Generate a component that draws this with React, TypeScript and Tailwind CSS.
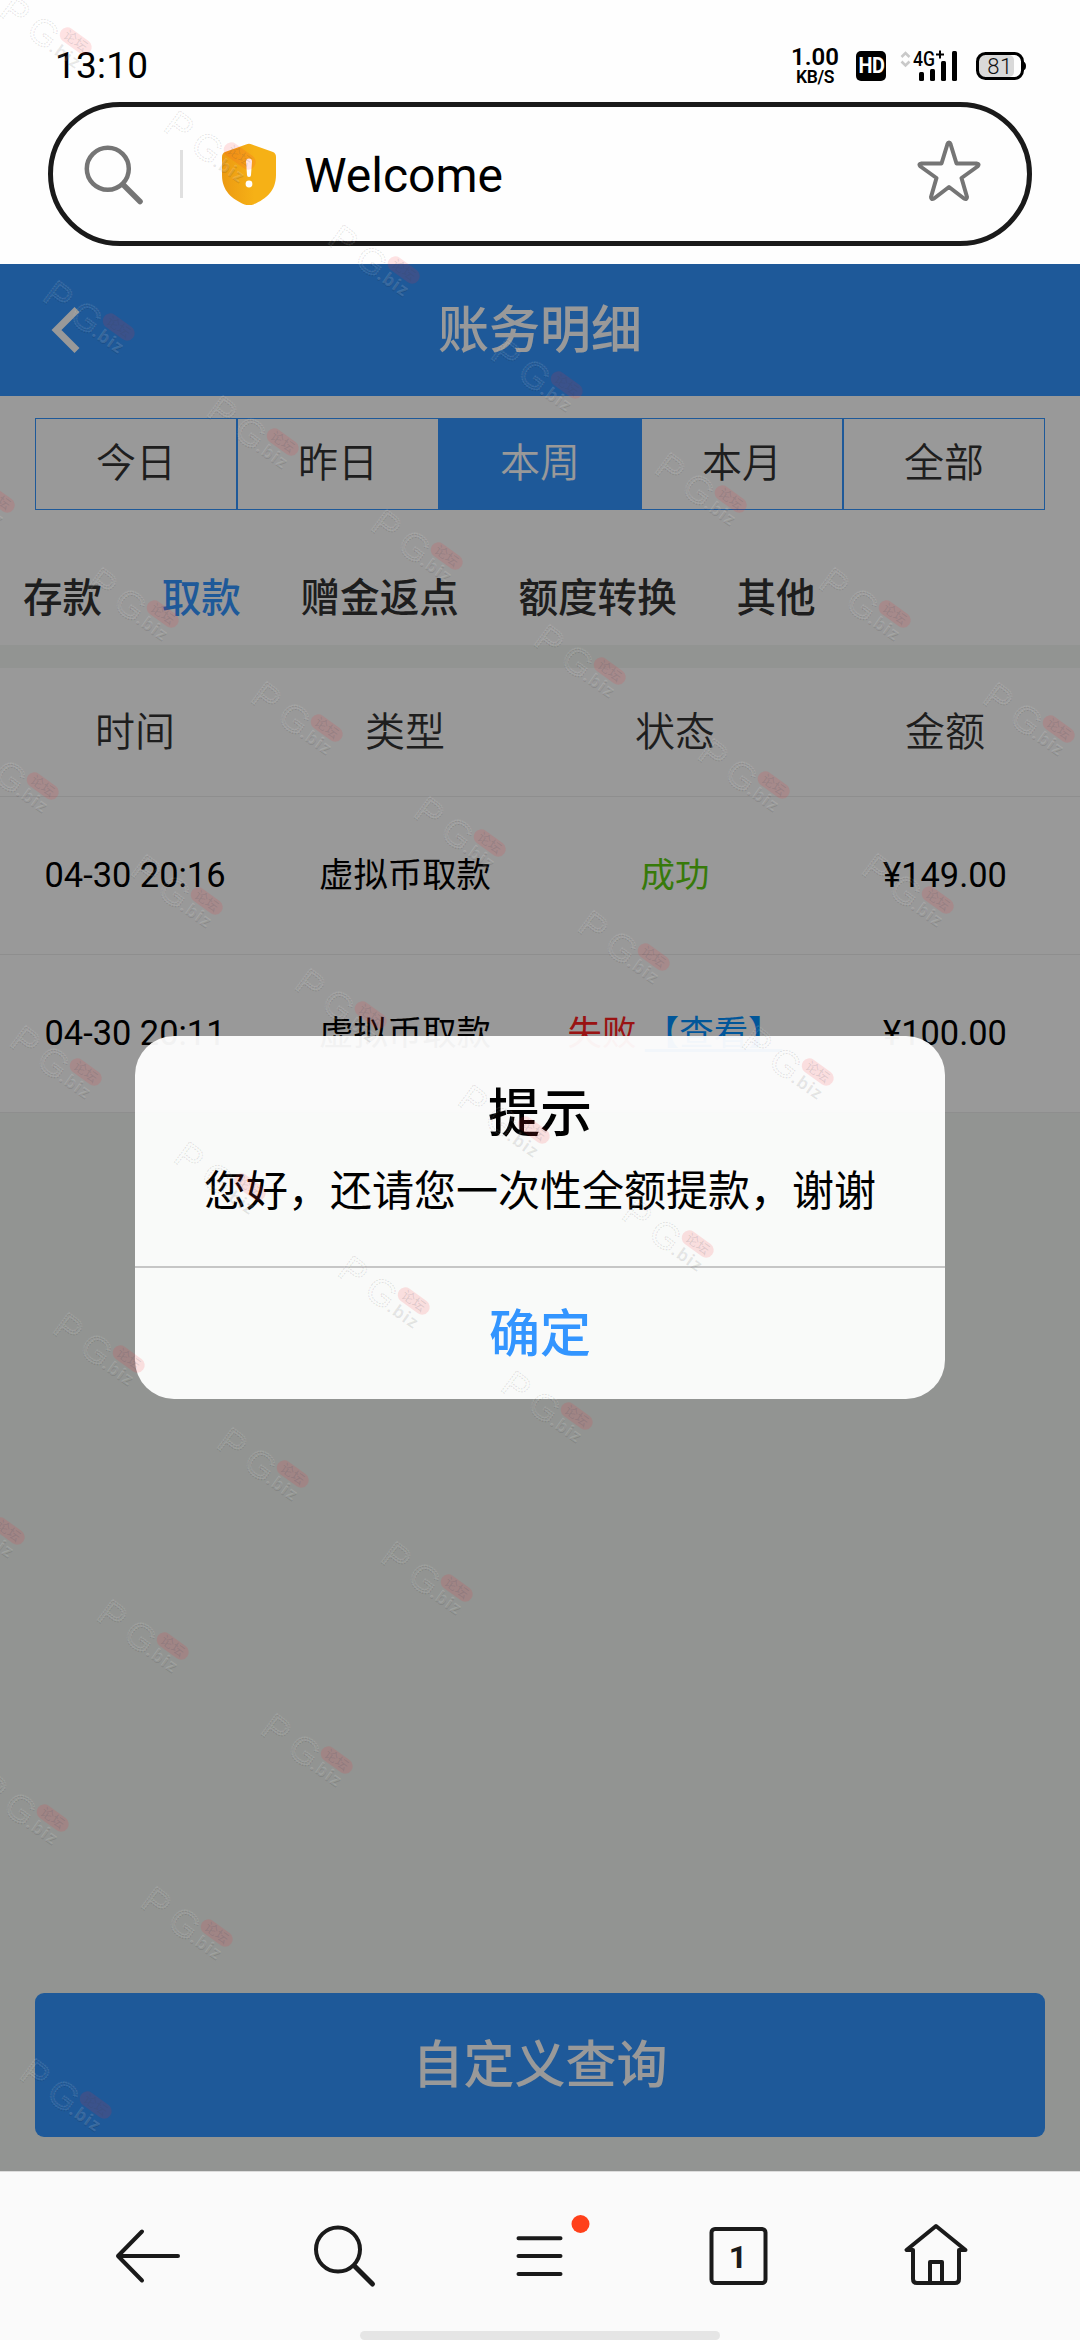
import type { ReactNode } from 'react';
import clsx from 'clsx';

const ranges = ['今日', '昨日', '本周', '本月', '全部'];
const tabs = ['存款', '取款', '赠金返点', '额度转换', '其他'];
const columns = ['时间', '类型', '状态', '金额'];

const records = [
  { time: '04-30 20:16', type: '虚拟币取款', ok: true, amount: '¥149.00' },
  { time: '04-30 20:11', type: '虚拟币取款', ok: false, amount: '¥100.00' },
];

// diagonal runs of the watermark: start point and number of stamps
const stampRuns = [
  { x: -2, y: -10, count: 7 },
  { x: 41, y: 276, count: 6 },
  { x: -79, y: 448, count: 6 },
  { x: -35, y: 735, count: 5 },
  { x: 8, y: 1021, count: 4 },
  { x: 51, y: 1308, count: 3 },
  { x: -69, y: 1480, count: 3 },
  { x: -25, y: 1767, count: 2 },
  { x: 18, y: 2054, count: 1 },
];

const stamps = stampRuns.flatMap(({ x, y, count }) =>
  Array.from({ length: count }, (_, i) => ({ x: x + i * 163.8, y: y + i * 114.6 }))
);

function Stamp({ x, y }: { x: number; y: number }) {
  return (
    <svg
      width="100"
      height="84"
      viewBox="0 0 100 84"
      className="absolute overflow-visible"
      style={{ left: x, top: y }}
    >
      <g transform="translate(0 23) rotate(37)" fontSize="37" letterSpacing="8.500" fontFamily="Liberation Sans">
        <text x="0.800" y="1" fill="none" stroke="#000" strokeOpacity="0.100" strokeWidth="1.200" strokeDasharray="2 1">PG</text>
        <text fill="#fff" fillOpacity="0.050" stroke="#fff" strokeOpacity="0.110" strokeWidth="1.500" strokeDasharray="2 0.700">PG</text>
      </g>
      <g transform="translate(50 59) rotate(35)" fontSize="17.500" letterSpacing="1" fontWeight="700" fontFamily="Open Sans">
        <text x="0.700" y="1" fill="#000" fillOpacity="0.090">.biz</text>
        <text fill="#fff" fillOpacity="0.150">.biz</text>
      </g>
      <g transform="translate(77.700 51) rotate(36)">
        <rect x="-18" y="-7.500" width="36" height="15" rx="7.500" fill="#ff2a30" fillOpacity="0.130" />
        <text
          y="4.500"
          textAnchor="middle"
          fontSize="13"
          fontFamily="Noto Sans CJK SC"
          fill="#345"
          fillOpacity="0.150"
        >
          论坛
        </text>
      </g>
    </svg>
  );
}

function StatusBar() {
  return (
    <div className="flex h-[102px] items-start pr-[54px] pl-[55px] text-black">
      <span className="mt-[43px] text-[37px] leading-[46px] tracking-[0.2px]">13:10</span>
      <div className="mt-[47px] ml-auto flex w-[48px] flex-col items-center">
        <span className="text-[24px] leading-[21px] font-semibold">1.00</span>
        <span className="text-[17.5px] leading-[19px] font-semibold tracking-[-0.4px]">KB/S</span>
      </div>
      <div className="mt-[51px] ml-[17px] flex h-[30px] w-[30px] items-center justify-center rounded-[5px] bg-black text-white">
        <span className="scale-x-90 text-[22px] leading-[30px] font-bold tracking-[-0.5px]">HD</span>
      </div>
      <svg width="58" height="32" viewBox="0 0 58 32" className="mt-[50px] ml-[14px] overflow-visible">
        <path d="M1.500 7 5.500 3l4 4M1.500 11.500l4 4 4-4" stroke="#c9c9c9" strokeWidth="2.600" fill="none" />
        <text x="13" y="15.700" fontFamily="Roboto" fontSize="19.500" fontWeight="500" textLength="22" lengthAdjust="spacingAndGlyphs">4G</text>
        <path d="M36 4.500h8M40 0.500v8" stroke="#000" strokeWidth="2" />
        <rect x="19" y="22" width="5" height="9" rx="1.500" />
        <rect x="30" y="19" width="5" height="12" rx="1.500" />
        <rect x="41" y="11" width="5" height="20" rx="1.500" />
        <rect x="52" y="1" width="5" height="30" rx="1.500" />
      </svg>
      <svg width="50" height="28" viewBox="0 0 50 28" className="mt-[52px] ml-[18px]">
        <rect x="3" y="3" width="35" height="22" rx="5" fill="#d9d9d9" />
        <rect x="1.500" y="1.500" width="45" height="25" rx="8" fill="none" stroke="#000" strokeWidth="3" />
        <path d="M47.500 9.500q2.500 1 2.500 4.500t-2.500 4.500z" />
        <text x="24" y="21.500" textAnchor="middle" fontFamily="Roboto" fontSize="22" fontWeight="300" letterSpacing="0.500" fill="#111">81</text>
      </svg>
    </div>
  );
}

function AddressBar() {
  return (
    <div className="mx-[48px] flex h-[144px] items-center rounded-full border-[5px] border-[#1a1a1a]">
      <svg width="60" height="62" viewBox="0 0 60 62" className="mt-[1px] ml-[30px]" fill="none" stroke="#757575">
        <circle cx="24.800" cy="24.700" r="21" strokeWidth="4.500" />
        <path d="M40 40.500 57 57.500" strokeWidth="5.500" strokeLinecap="round" />
      </svg>
      <div className="ml-[37px] h-[48px] w-[3px] bg-[#e0e0e0]" />
      <svg width="54" height="62" viewBox="0 0 54 62" className="ml-[39px]">
        <defs>
          <linearGradient id="shield" x1="0" y1="0" x2="1" y2="0">
            <stop offset="0" stopColor="#ec9a12" />
            <stop offset="0.600" stopColor="#f6b116" />
          </linearGradient>
        </defs>
        <path d="M24 1.500q3-1.400 6 0L51 9q3 1.300 3 5v18c0 16-10 24-22.500 29.500q-4.500 1.500-9 0C10 56 0 48 0 32V14q0-3.700 3-5z" fill="url(#shield)" />
        <path d="M24 18.500a3 3 0 0 1 6 0L29 32a2 2 0 0 1-4 0z" fill="#fff" />
        <circle cx="27" cy="41" r="3.400" fill="#fff" />
      </svg>
      <span className="mt-[3px] ml-[28px] text-[48px] leading-[60px] text-black">Welcome</span>
      <svg width="64" height="62" viewBox="0 0 64 62" className="mr-[46px] mb-[8px] ml-auto">
        <path
          d="M32 3.500q1 0 1.500 1.500l6 19.500h20q3.500.500 1 3L44.500 39l5.500 19q0 3-3 1.500L32 48 17 59.500q-3 1.500-3-1.500l5.500-19L3.500 27.500q-2.500-2.500 1-3h20L30.500 5q.500-1.500 1.500-1.500z"
          fill="none"
          stroke="#757575"
          strokeWidth="4"
          strokeLinejoin="round"
        />
      </svg>
    </div>
  );
}

function TipDialog() {
  return (
    <div className="absolute top-[772px] left-[135px] flex h-[363px] w-[810px] flex-col overflow-hidden rounded-[39px] bg-white/95 text-center text-black">
      <div className="h-[232px] border-b-2 border-[#c6c6c6] pt-[47px]">
        <h2 className="text-[52px] leading-[64px] font-medium">提示</h2>
        <p className="mt-[15px] text-[42px] leading-[60px]">您好，还请您一次性全额提款，谢谢</p>
      </div>
      <button className="flex-1 pt-[2px] text-[51px] leading-[60px] font-medium text-[#3395ff]">确定</button>
    </div>
  );
}

function NavIcon({ children }: { children: ReactNode }) {
  return (
    <svg
      width="66"
      height="66"
      viewBox="0 0 66 66"
      fill="none"
      stroke="#1a1a1a"
      strokeWidth="4"
      strokeLinecap="round"
      strokeLinejoin="round"
      className="overflow-visible"
    >
      {children}
    </svg>
  );
}

function BottomNav() {
  return (
    <nav className="flex h-[169px] flex-col items-center border-t border-[#dcdcdc] bg-[#fafafa]">
      <div className="mt-[51px] flex w-full justify-between pr-[111px] pl-[114px]">
        <NavIcon>
          <path d="M4 33h60M28 8.500 4 33l24 24.500" />
        </NavIcon>
        <NavIcon>
          <circle cx="27" cy="26.500" r="22" />
          <path d="M43.500 43 61.500 61" strokeWidth="5" />
        </NavIcon>
        <NavIcon>
          <path d="M9.500 15.300h42M9.500 33h42M9.500 51h42" />
          <circle cx="71.500" cy="1" r="9" fill="#ff401a" stroke="none" />
        </NavIcon>
        <NavIcon>
          <rect x="5.500" y="6" width="54" height="54" rx="3.500" />
          <text x="32" y="45" textAnchor="middle" fontFamily="Roboto" fontSize="32" fontWeight="700" fill="#1a1a1a" stroke="none">1</text>
        </NavIcon>
        <NavIcon>
          <path d="M33 3 3.500 27H10v29q0 4 4 4h38q4 0 4-4V27h6.500z" />
          <path d="M27 60V39h12v21" />
        </NavIcon>
      </div>
      <div className="mt-auto h-[9px] w-[360px] rounded-full bg-[#e5e5e5]" />
    </nav>
  );
}

export default function App() {
  return (
    <div
      lang="zh-CN"
      className="relative flex h-[2340px] w-[1080px] flex-col overflow-hidden bg-[#fefefe] font-[Roboto,'Noto_Sans_CJK_SC',sans-serif]"
    >
      <StatusBar />
      <AddressBar />

      <main className="relative mt-[18px] flex flex-1 flex-col bg-[#f3f7f4]">
        <header className="flex h-[132px] items-center bg-[#3395ff] text-white">
          <svg width="30" height="46" viewBox="0 0 30 46" className="ml-[51px]">
            <path d="M26 2.500 5.500 23 26 43.500" fill="none" stroke="#fff" strokeWidth="7" />
          </svg>
          <h1 className="mt-[2px] mr-[81px] flex-1 text-center text-[51px] leading-[60px] font-medium">账务明细</h1>
        </header>

        <div className="h-[249px] bg-white">
          <div className="mx-[35px] mt-[22px] flex h-[92px]">
            {ranges.map((range) => (
              <button
                key={range}
                className={clsx(
                  'flex-1 border border-[#3395ff] pb-px text-[40px] font-[350]',
                  range === '本周' ? 'bg-[#3395ff] text-white' : 'text-[#333]'
                )}
              >
                {range}
              </button>
            ))}
          </div>
          <div className="mt-[59px] ml-[23px] flex gap-[59.6px] text-[39.6px] leading-[60px] font-medium">
            {tabs.map((tab) => (
              <span key={tab} className={tab === '取款' ? 'text-[#3395ff]' : 'text-[#333]'}>
                {tab}
              </span>
            ))}
          </div>
        </div>

        {/* Records */}
        <div className="mt-[23px] bg-white text-center">
          <div className="grid h-[129px] grid-cols-4 items-center border-b border-[#ededed] pt-[2px] text-[40px] font-[350] text-[#333]">
            {columns.map((col) => (
              <span key={col}>{col}</span>
            ))}
          </div>
          {records.map((row) => (
            <div
              key={row.time}
              className="grid h-[158px] grid-cols-4 items-center border-b border-[#ededed] pt-px text-[34.4px] whitespace-nowrap text-black"
            >
              <span>{row.time}</span>
              <span>{row.type}</span>
              {row.ok ? (
                <span className="text-[#5dcb10]">成功</span>
              ) : (
                <span className="text-[#ff2020]">
                  失败 <a className="text-[#0090ff] underline underline-offset-4">【查看】</a>
                </span>
              )}
              <span>{row.amount}</span>
            </div>
          ))}
        </div>

        <button className="mx-[35px] mt-auto mb-[34px] h-[144px] rounded-[9px] bg-[#3395ff] pt-[2px] text-[51px] font-medium text-white">
          自定义查询
        </button>

        <div className="absolute inset-0 bg-black/40" />
        <TipDialog />
      </main>

      <BottomNav />

      <div className="pointer-events-none absolute inset-0">
        {stamps.map((s) => (
          <Stamp key={`${s.x}-${s.y}`} x={s.x} y={s.y} />
        ))}
      </div>
    </div>
  );
}
